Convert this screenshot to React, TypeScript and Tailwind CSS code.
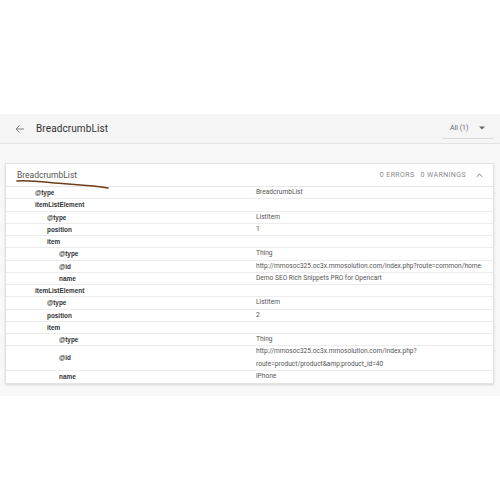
import React from "react";

type Row = { label: string; value?: string; value2?: string; level: number };

const rows: Row[] = [
  { label: "@type", value: "BreadcrumbList", level: 0 },
  { label: "itemListElement", level: 0 },
  { label: "@type", value: "ListItem", level: 1 },
  { label: "position", value: "1", level: 1 },
  { label: "item", level: 1 },
  { label: "@type", value: "Thing", level: 2 },
  { label: "@id", value: "http://mmosoc325.oc3x.mmosolution.com/index.php?route=common/home", level: 2 },
  { label: "name", value: "Demo SEO Rich Snippets PRO for Opencart", level: 2 },
  { label: "itemListElement", level: 0 },
  { label: "@type", value: "ListItem", level: 1 },
  { label: "position", value: "2", level: 1 },
  { label: "item", level: 1 },
  { label: "@type", value: "Thing", level: 2 },
  {
    label: "@id",
    value: "http://mmosoc325.oc3x.mmosolution.com/index.php?",
    value2: "route=product/product&amp;product_id=40",
    level: 2,
  },
  { label: "name", value: "iPhone", level: 2 },
];

const padClass = ["pl-[29px]", "pl-[41px]", "pl-[53px]"];

export default function App() {
  return (
    <div
      className="w-[500px] h-[500px] bg-white flex flex-col overflow-hidden"
      style={{ fontFamily: "Roboto, 'Liberation Sans', sans-serif" }}
    >
      <div className="h-[114px] shrink-0 bg-white" />
      {/* Top header */}
      <div className="h-[30px] shrink-0 bg-[#f5f5f5] border-b border-[#e2e2e2] flex items-center">
        <svg width="12" height="12" viewBox="0 0 24 24" className="ml-[14px]">
          <path d="M20 12H5M11 5l-7 7 7 7" fill="none" stroke="#777" strokeWidth="1.8" />
        </svg>
        <span className="ml-[10px] text-[10px] text-[#333] tracking-[0.1px]">BreadcrumbList</span>
        <div className="ml-auto mr-[7px] w-[50px] h-[20px] border-b border-[#d8d8d8] flex items-center">
          <span className="ml-[7px] text-[7px] text-[#666]">All (1)</span>
          <svg width="6" height="4" viewBox="0 0 10 5" className="ml-auto mr-[8px]">
            <path d="M0 0l5 5 5-5z" fill="#666" />
          </svg>
        </div>
      </div>
      {/* Content */}
      <div className="bg-[#f8f8f8] pt-[19px] pb-[12px] pl-[5px] pr-[6px]">
        <div className="bg-white border border-[#e2e2e2] shadow-[0_1px_2px_rgba(0,0,0,0.15)] relative">
          <div className="h-[23px] border-b border-[#e6e6e6] flex items-center">
            <span className="ml-[11px] text-[8.5px] text-[#555]">BreadcrumbList</span>
            <span className="ml-auto text-[7px] text-[#888] tracking-[0.4px]">0 ERRORS</span>
            <span className="ml-[6px] text-[7px] text-[#888] tracking-[0.4px]">0 WARNINGS</span>
            <svg width="7" height="5" viewBox="0 0 10 6" className="ml-[10px] mr-[10px]">
              <path d="M1 5l4-4 4 4" fill="none" stroke="#777" strokeWidth="1.4" />
            </svg>
          </div>
          <svg
            className="absolute left-[9px] top-[13px]"
            width="100"
            height="14"
            viewBox="0 0 100 14"
          >
            <path
              d="M2 4 C 10 3, 20 4, 35 5.5 C 55 7.5, 75 8, 93 11"
              fill="none"
              stroke="#6e3c1c"
              strokeWidth="1.6"
              strokeLinecap="round"
            />
          </svg>
          {rows.map((r, i) => (
            <div
              key={i}
              className={`flex ${r.value2 ? "h-[24.5px]" : "h-[12.25px]"} ${
                i < rows.length - 1 ? "border-b border-[#ececec]" : ""
              }`}
            >
              <div
                className={`w-[244px] shrink-0 flex items-center ${padClass[r.level]} text-[6.4px] font-bold text-[#333] leading-[11.25px]`}
                style={{ fontFamily: "'Liberation Sans', Arial, sans-serif" }}
              >
                {r.label}
              </div>
              <div className="flex flex-col text-[6.6px] text-[#555] leading-[11.25px] pl-[6px]">
                <span>{r.value ?? ""}</span>
                {r.value2 && <span className="leading-[12.25px]">{r.value2}</span>}
              </div>
            </div>
          ))}
        </div>
      </div>
      <div className="flex-1 bg-white" />
    </div>
  );
}
